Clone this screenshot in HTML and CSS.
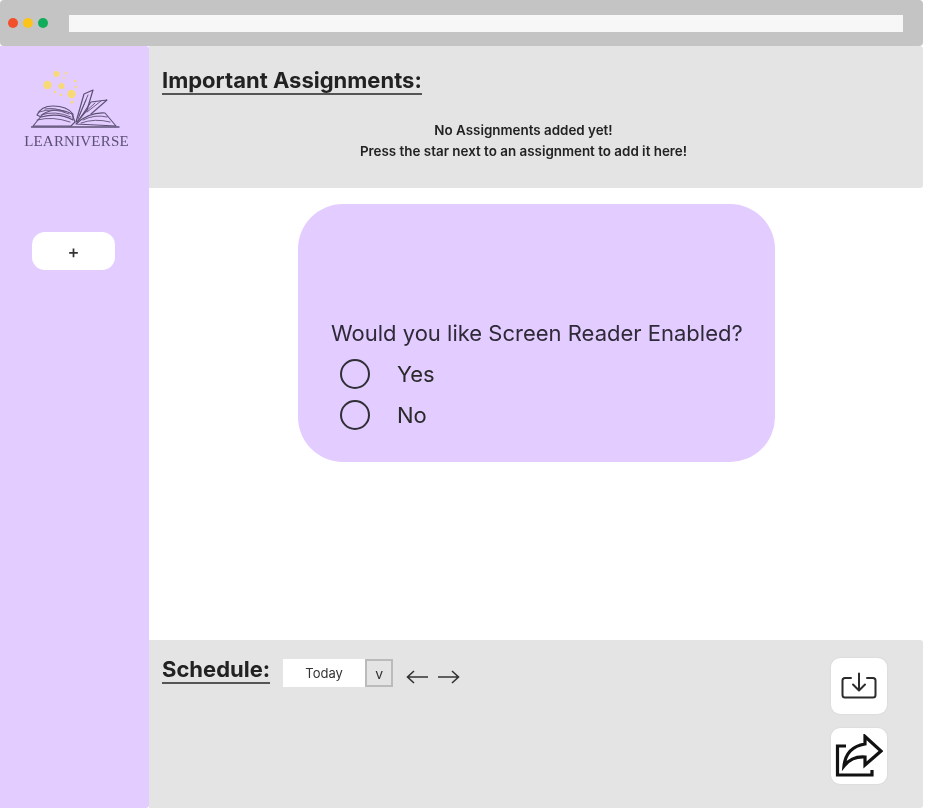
FILE: index.html
```html
<!DOCTYPE html>
<html lang="en">
<head>
    <meta charset="UTF-8">
    <meta name="viewport" content="width=device-width, initial-scale=1.0">
    <title>Learniverse</title>
    <link rel="stylesheet" href="styles.css">
</head>
<body>

<div class="browser-bar">
    <span class="dot red"></span>
    <span class="dot yellow"></span>
    <span class="dot green"></span>
    <div class="address"></div>
</div>

<div class="app">
    <div class="sidebar">
        <div class="logo">
            <svg width="92" height="62" viewBox="0 0 92 62" fill="none" stroke="#5d5075" stroke-linecap="round" stroke-linejoin="round">
                <g fill="#f7da75" stroke="none">
                    <circle cx="27.5" cy="4" r="3"/>
                    <circle cx="18.5" cy="15" r="4.2"/>
                    <circle cx="32.5" cy="16" r="3"/>
                    <circle cx="42.5" cy="24" r="4.2"/>
                    <circle cx="37" cy="3" r="1.2"/>
                    <circle cx="35" cy="8" r="1"/>
                    <circle cx="46" cy="11" r="1.2"/>
                    <circle cx="47" cy="17" r="1.2"/>
                    <circle cx="26" cy="22" r="1.2"/>
                    <circle cx="32" cy="25" r="1.2"/>
                    <circle cx="43" cy="32" r="1.5"/>
                </g>
                <path d="M4 56 L14 44 Q28 36 43 44 L46 52 L42 56 Z" stroke-width="1.1"/>
                <path d="M8 45 Q12 36 24 36 Q38 36 44 44 L44 50 Q30 42 12 47 Z" stroke-width="1.1"/>
                <path d="M10 42 Q24 37 40 44 M12 45 Q26 40 42 47 M8 50 Q24 46 41 52 M16 39 Q26 37 36 42" stroke-width=".9"/>
                <path d="M47 52 L55 24 L64 20 L58 40 L48 52 Z" stroke-width="1.2"/>
                <path d="M52 47 L62 32 L78 30 L62 44" stroke-width="1.1"/>
                <path d="M50 46 L59 25 M54 44 L66 33 M58 42 L72 31 M49 49 L57 30" stroke-width=".9"/>
                <path d="M47 54 Q60 42 76 43 L87 56 Z" stroke-width="1.1"/>
                <path d="M54 50 Q66 44 78 47 M52 53 Q66 48 81 52" stroke-width=".9"/>
                <path d="M2.5 57 H90" stroke-width="1.3"/>
            </svg>
            <div class="logo-name">LEARNIVERSE</div>
        </div>
        <button class="add-btn">+</button>
    </div>

    <div class="main">
        <div class="panel assignments">
            <h1 class="heading">Important Assignments:</h1>
            <p class="empty-note">No Assignments added yet!<br>Press the star next to an assignment to add it here!</p>
        </div>

        <div class="middle">
            <div class="dialog">
                <div class="question">Would you like Screen Reader Enabled?</div>
                <label class="option"><span class="radio"></span>Yes</label>
                <label class="option"><span class="radio"></span>No</label>
            </div>
        </div>

        <div class="panel schedule">
            <div class="schedule-left">
                <h1 class="heading">Schedule:</h1>
                <div class="select">
                    <span class="select-value">Today</span>
                    <span class="select-arrow">v</span>
                </div>
                <svg class="arrows" width="54" height="16" viewBox="0 0 54 16" fill="none" stroke="#333" stroke-width="1.6">
                    <path d="M22 8 H1.5 M8 2 L1.5 8 L8 14"/>
                    <path d="M32 8 H52.5 M46 2 L52.5 8 L46 14"/>
                </svg>
            </div>
            <div class="actions">
                <button class="icon-btn">
                    <svg width="36" height="28" viewBox="0 0 36 28" fill="none" stroke="#2b2b2b" stroke-width="2" stroke-linecap="round" stroke-linejoin="round">
                        <path d="M10 6 H4 Q1.5 6 1.5 8.5 V23 Q1.5 25.5 4 25.5 H32 Q34.5 25.5 34.5 23 V8.5 Q34.5 6 32 6 H26"/>
                        <path d="M18 1.5 V18 M12 12.5 L18 18.5 L24 12.5"/>
                    </svg>
                </button>
                <button class="icon-btn">
                    <svg width="48" height="44" viewBox="0 0 48 44" fill="none" stroke="#111" stroke-width="3.2" stroke-linejoin="miter">
                        <path d="M11 12 H2.5 V41 H37 V36"/>
                        <path d="M30 2.5 L46 17 L30 31 V23 Q17 22 9 32 Q11 13 30 10 Z"/>
                    </svg>
                </button>
            </div>
        </div>
    </div>
</div>

</body>
</html>
```

FILE: styles.css
```css
* {
    box-sizing: border-box;
}

html, body {
    height: 100%;
}

body {
    margin: 0;
    padding-right: 2px;
    background-color: #fff;
    font-family: Inter, "Liberation Sans", sans-serif;
    color: #222;
    display: flex;
    flex-direction: column;
    overflow: hidden;
    filter: blur(0.5px);
}

.browser-bar {
    height: 46px;
    background-color: #c4c4c4;
    border-radius: 4px 4px 4px 4px;
    display: flex;
    align-items: center;
    gap: 5px;
    padding: 0 20px 0 8px;
    flex-shrink: 0;
}

.dot {
    width: 10px;
    height: 10px;
    border-radius: 50%;
}

.red { background-color: #f2502a; }
.yellow { background-color: #fcc419; }
.green { background-color: #12ad5b; }

.address {
    flex: 1;
    height: 17px;
    margin-left: 16px;
    background-color: #f7f7f7;
}

.app {
    flex: 1;
    display: flex;
    min-height: 0;
}

.sidebar {
    width: 149px;
    background-color: #e3ccff;
    border-radius: 0 3px 3px 0;
    display: flex;
    flex-direction: column;
    align-items: center;
    padding-top: 24px;
    flex-shrink: 0;
}

.logo {
    display: flex;
    flex-direction: column;
    align-items: center;
}

.logo svg {
    display: block;
    margin-left: 2px;
}

.logo-name {
    font-family: "Liberation Serif", serif;
    font-size: 15px;
    line-height: 18px;
    color: #5d5075;
    letter-spacing: 0.2px;
    margin-left: 4px;
}

.add-btn {
    width: 83px;
    height: 38px;
    margin-top: 82px;
    margin-right: 2px;
    border: 0;
    border-radius: 13px;
    background-color: #fff;
    font-family: Inter, sans-serif;
    font-size: 18px;
    font-weight: 500;
    color: #333;
    padding: 0;
}

.main {
    flex: 1;
    display: flex;
    flex-direction: column;
    min-width: 0;
}

.panel {
    background-color: #e4e4e4;
    border-radius: 0 3px 3px 0;
}

.heading {
    display: inline-block;
    margin: 0;
    font-size: 22px;
    font-weight: 700;
    line-height: 26px;
    color: #222;
    border-bottom: 2px solid #555;
}

.assignments {
    height: 142px;
    padding: 21px 0 0 13px;
}

.empty-note {
    margin: 25px 38px 0 0;
    text-align: center;
    font-size: 13.4px;
    font-weight: 600;
    line-height: 21px;
    color: #222;
}

.middle {
    flex: 1;
    padding: 16px 0 0 1px;
    display: flex;
    justify-content: center;
}

.dialog {
    width: 477px;
    height: 258px;
    background-color: #e3ccff;
    border-radius: 45px;
    padding: 115px 0 0 33px;
}

.question {
    font-size: 22px;
    line-height: 28px;
    color: #2f2a38;
    margin-bottom: 6px;
}

.option {
    display: flex;
    align-items: center;
    gap: 27px;
    height: 41px;
    padding-left: 9px;
    font-size: 22px;
    color: #2a2a2a;
}

.radio {
    width: 30px;
    height: 30px;
    border: 2px solid #2f2f35;
    border-radius: 50%;
}

.schedule {
    height: 168px;
    padding: 16px 36px 0 13px;
    display: flex;
    justify-content: space-between;
    align-items: flex-start;
}

.schedule-left {
    display: flex;
    align-items: flex-start;
}

.select {
    display: flex;
    align-items: stretch;
    height: 28px;
    margin: 3px 0 0 13px;
}

.select-value {
    width: 82px;
    background-color: #fff;
    font-size: 13px;
    line-height: 28px;
    text-align: center;
    color: #333;
}

.select-arrow {
    width: 28px;
    border: 2px solid #bbb;
    font-size: 14px;
    line-height: 26px;
    text-align: center;
    color: #333;
}

.arrows {
    margin: 13px 0 0 13px;
}

.actions {
    display: flex;
    flex-direction: column;
    gap: 14px;
    margin-top: 2px;
}

.icon-btn {
    width: 56px;
    height: 56px;
    border: 0;
    border-radius: 9px;
    background-color: #fff;
    box-shadow: 0 0 2px rgba(0, 0, 0, 0.1);
    padding: 0;
    display: flex;
    align-items: center;
    justify-content: center;
}
```
